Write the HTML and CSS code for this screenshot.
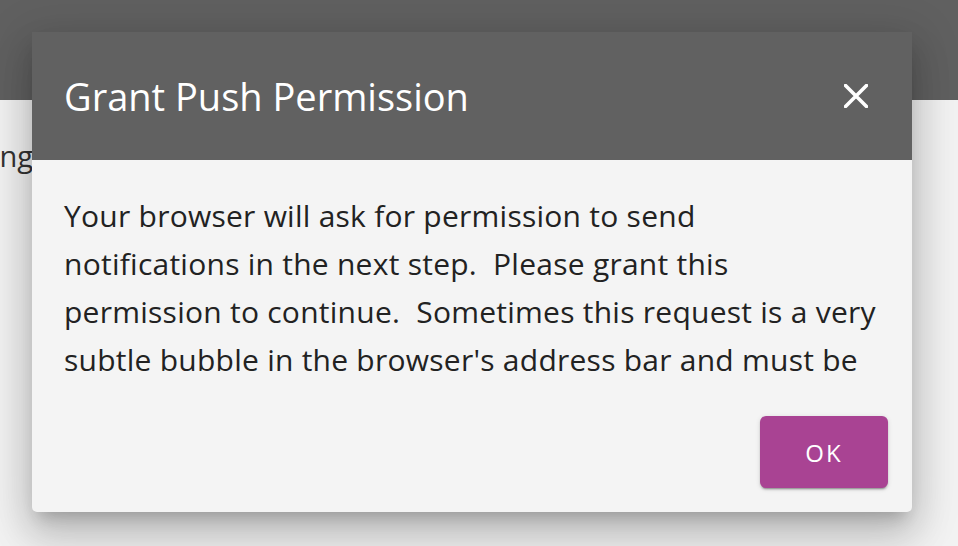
FILE: index.html
```html
<!DOCTYPE html>
<html>
<head>
<meta charset="utf-8">
<link rel="stylesheet" href="styles.css">
</head>
<body>
<div class="topbar"></div>
<div class="page">
  <div class="page-text"><span>Setting</span></div>
</div>
<div class="dialog">
  <div class="dialog-header">
    <h2 class="dialog-title">Grant Push Permission</h2>
    <button class="close-btn" aria-label="close">
      <svg width="24" height="24" viewBox="0 0 24 24"><path d="M1.5 1.5 22.5 22.5M22.5 1.5 1.5 22.5" stroke="#fff" stroke-width="3.6" stroke-linecap="round" fill="none"/></svg>
    </button>
  </div>
  <div class="dialog-body">
    <p class="dialog-text">Your browser will ask for permission to send<br>notifications in the next step.&nbsp; Please grant this<br>permission to continue.&nbsp; Sometimes this request is a very<br>subtle bubble in the browser's address bar and must be</p>
  </div>
  <div class="dialog-actions">
    <button class="ok-btn">OK</button>
  </div>
</div>
</body>
</html>
```

FILE: styles.css
```css
html, body {
  margin: 0;
  padding: 0;
}
body {
  background: #f2f2f2;
  font-family: "Open Sans", "Noto Sans", sans-serif;
  width: 958px;
  height: 546px;
  overflow: hidden;
  position: relative;
}
.topbar {
  height: 100px;
  background: #606060;
}
.page {
  padding-top: 36px;
}
.page-text {
  width: 33px;
  overflow: hidden;
  display: flex;
  justify-content: flex-end;
  font-size: 29px;
  color: #333;
  white-space: nowrap;
}
.dialog {
  position: absolute;
  top: 32px;
  left: 32px;
  width: 880px;
  height: 480px;
  background: #f4f4f4;
  border-radius: 0 0 5px 5px;
  box-shadow: 0 11px 15px -7px rgba(0,0,0,.2), 0 24px 38px 3px rgba(0,0,0,.14), 0 9px 46px 8px rgba(0,0,0,.12);
  display: flex;
  flex-direction: column;
}
.dialog-header {
  height: 128px;
  background: #616161;
  display: flex;
  align-items: center;
  justify-content: space-between;
  padding: 0 32px;
  box-sizing: border-box;
}
.dialog-title {
  margin: 0;
  font-weight: 400;
  font-size: 38px;
  color: #fff;
}
.close-btn {
  width: 48px;
  height: 48px;
  border: none;
  background: transparent;
  padding: 0;
  display: flex;
  align-items: center;
  justify-content: center;
}
.close-btn svg {
  width: 24px;
  height: 24px;
}
.dialog-body {
  height: 232px;
  box-sizing: border-box;
  padding: 32px 32px 8px;
  overflow: hidden;
}
.dialog-text {
  margin: 0;
  font-size: 30px;
  letter-spacing: 0.25px;
  line-height: 48px;
  color: #222;
}
.dialog-actions {
  flex: 1;
  display: flex;
  justify-content: flex-end;
  align-items: flex-end;
  padding: 24px;
}
.ok-btn {
  width: 128px;
  height: 72px;
  border: none;
  border-radius: 6px;
  background: #a94393;
  color: #fff;
  font-family: inherit;
  font-size: 24px;
  letter-spacing: 2px;
  box-shadow: 0 3px 1px -2px rgba(0,0,0,.2), 0 2px 2px 0 rgba(0,0,0,.14), 0 1px 5px 0 rgba(0,0,0,.12);
}
```
